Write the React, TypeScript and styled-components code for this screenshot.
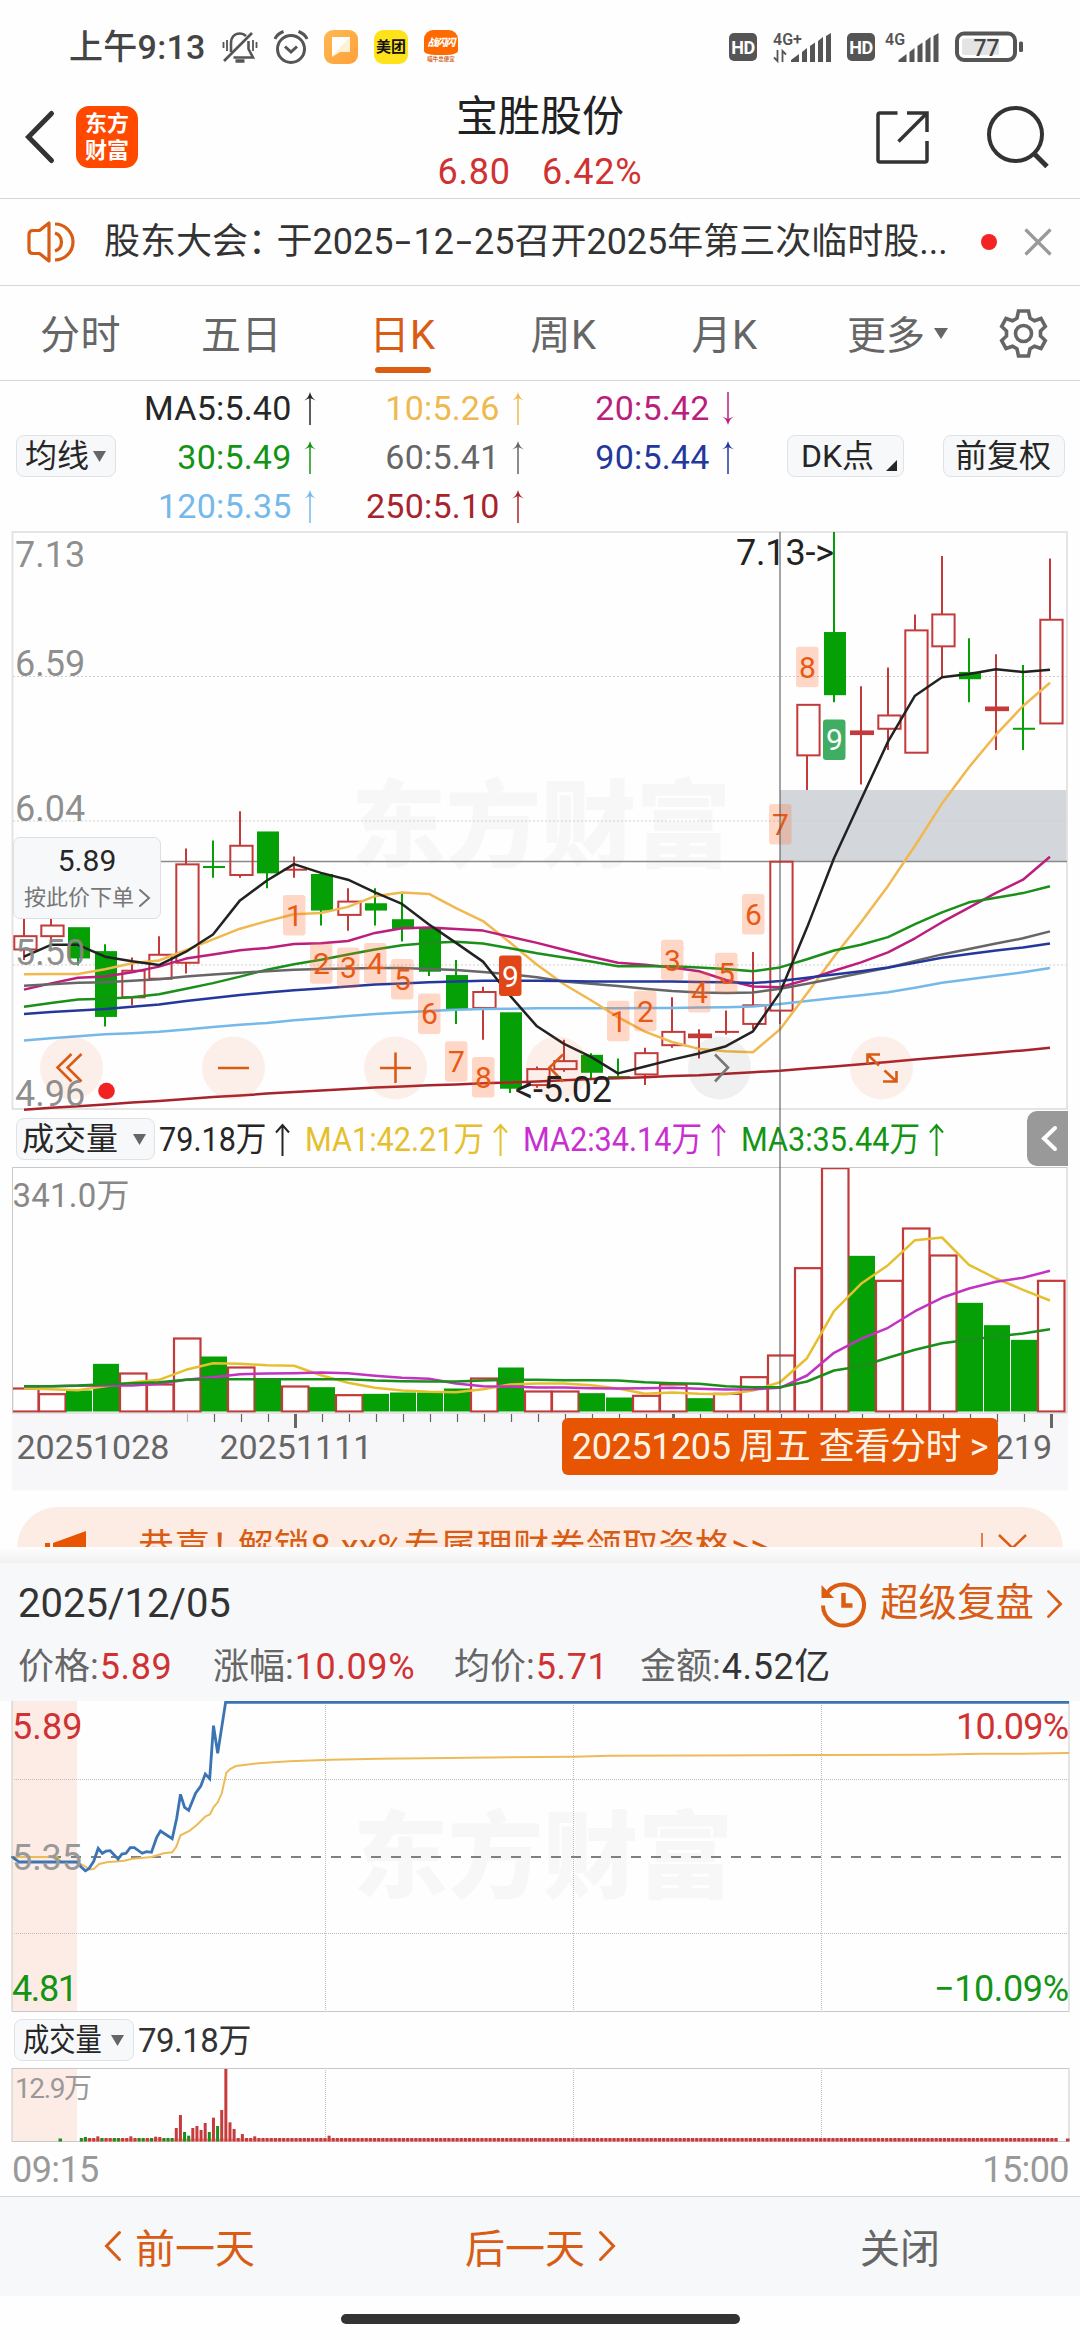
import React from "react";
import styled, { createGlobalStyle } from "styled-components";

const RED = "#c33a3a";
const GREEN = "#05a005";
const ORANGE = "#d95c14";

const GlobalStyle = createGlobalStyle`
  * { box-sizing: border-box; }
  body {
    margin: 0;
    background: #fff;
    color: #333;
    font-family: Roboto, "Noto Sans CJK SC", sans-serif;
    -webkit-font-smoothing: antialiased;
  }
  svg { display: block; flex: none; overflow: visible; }
  svg text { font-family: Roboto, "Noto Sans CJK SC", sans-serif; }
`;

const Screen = styled.main`
  width: 1080px;
  height: 2340px;
  display: flex;
  flex-direction: column;
  overflow: hidden;
  background: #fefefe;
  & > * { flex-shrink: 0; }
`;

/* ---------- status bar ---------- */

const StatusBar = styled.div`
  height: 90px;
  padding: 30px 57px 26px 69px;
  display: flex;
  justify-content: space-between;
  color: #444;
`;
const StatusGroup = styled.div`
  display: flex;
  align-items: center;
  gap: 16px;
  height: 34px;
`;
const Clock = styled.span`
  font-size: 34px;
  line-height: 34px;
  font-weight: 500;
  letter-spacing: 0.3px;
  width: 137px;
  white-space: nowrap;
`;
const AppBadge = styled.span<{ $bg: string }>`
  width: 34px;
  height: 34px;
  border-radius: 9px;
  background: ${(p) => p.$bg};
  display: flex;
  flex-direction: column;
  align-items: center;
  justify-content: center;
  font-weight: 700;
  font-size: 15px;
  line-height: 15px;
  color: #111;
`;
const PromoTop = styled.span`
  height: 25px;
  width: 34px;
  background: #ff6a00;
  border-radius: 9px 9px 12px 12px / 9px 9px 4px 4px;
  color: #fff;
  font-size: 10px;
  font-style: italic;
  font-weight: 900;
  letter-spacing: -1px;
  line-height: 26px;
  text-align: center;
`;
const PromoBottom = styled.span`
  height: 9px;
  font-size: 5.5px;
  line-height: 9px;
  color: #d0662c;
  white-space: nowrap;
`;
const HdBadge = styled.span<{ $tight?: boolean }>`
  width: 28px;
  height: 28px;
  margin-right: ${(p) => (p.$tight ? -6 : 0)}px;
  border-radius: 5px;
  background: #555;
  color: #fff;
  font-size: 18px;
  letter-spacing: -0.5px;
  line-height: 29px;
  font-weight: 700;
  text-align: center;
`;

/* ---------- header ---------- */

const Header = styled.header`
  height: 109px;
  border-bottom: 1px solid #d6d6d6;
  padding: 0 31px 0 26px;
  display: grid;
  grid-template-columns: 260px 1fr 260px;
`;
const HeaderSide = styled.div<{ $end?: boolean }>`
  display: flex;
  align-items: center;
  height: 94px;
  gap: ${(p) => (p.$end ? 58 : 22)}px;
  justify-content: ${(p) => (p.$end ? "flex-end" : "flex-start")};
`;
const Logo = styled.div`
  width: 62px;
  height: 62px;
  border-radius: 13px;
  background: #ff4800;
  color: #fff;
  font-size: 22px;
  font-weight: 700;
  line-height: 27px;
  padding-top: 4px;
  text-align: center;
`;
const TitleBlock = styled.div`
  display: flex;
  flex-direction: column;
  align-items: center;
  padding-left: 5px;
`;
const Title = styled.h1`
  margin: 0;
  height: 56px;
  font-size: 42px;
  line-height: 54px;
  font-weight: 400;
  color: #222;
`;
const Quote = styled.div`
  display: flex;
  gap: 31px;
  height: 40px;
  font-size: 36px;
  line-height: 52px;
  letter-spacing: 0.8px;
  color: #d03232;
`;

/* ---------- notice ---------- */

const Notice = styled.div`
  height: 87px;
  border-bottom: 1px solid #d6d6d6;
  padding: 0 27px;
  display: flex;
  align-items: center;
`;
const NoticeText = styled.div`
  margin-left: 29px;
  width: 877px;
  font-size: 36px;
  line-height: 48px;
  white-space: nowrap;
  color: #333;
`;
const Tight = styled.span<{ $by: number }>`
  letter-spacing: ${(p) => -p.$by}px;
`;
const Dash = styled.span`
  display: inline-block;
  width: 20px;
  text-align: center;
  transform: scaleX(1.6);
`;
const Dot = styled.i`
  width: 16px;
  height: 16px;
  flex: none;
  border-radius: 50%;
  background: #f22424;
  margin-right: 27px;
`;

/* ---------- period tabs ---------- */

const Tabs = styled.nav`
  height: 95px;
  border-bottom: 1px solid #d6d6d6;
  display: flex;
`;
const Tab = styled.div<{ $active?: boolean }>`
  width: 161px;
  display: flex;
  flex-direction: column;
  align-items: center;
  font-size: 40px;
  line-height: 100px;
  height: 94px;
  letter-spacing: 0.5px;
  color: ${(p) => (p.$active ? ORANGE : "#666")};
  &::after {
    content: "";
    display: ${(p) => (p.$active ? "block" : "none")};
    width: 56px;
    height: 6px;
    margin-top: -19px;
    border-radius: 3px;
    background: #db5d12;
    flex: none;
  }
`;
const MoreTab = styled.div`
  display: flex;
  align-items: center;
  gap: 9px;
  height: 94px;
  margin-left: 42px;
  width: 153px;
  font-size: 39px;
  line-height: 60px;
  color: #666;
`;
const MoreLabel = styled.span`
  padding-top: 5px;
`;

/* ---------- MA legend ---------- */

const MaPanel = styled.section`
  height: 150px;
  padding: 0 15px 0 16px;
  display: flex;
  align-items: center;
`;
const Chip = styled.button<{ $w: number; $pad?: number }>`
  width: ${(p) => p.$w}px;
  height: 42px;
  flex: none;
  padding: 0 0 0 ${(p) => p.$pad ?? 8}px;
  border: 1.5px solid #dfe2e7;
  border-radius: 8px;
  background: #f7f8fa;
  display: flex;
  align-items: center;
  font: 32px/38px Roboto, "Noto Sans CJK SC", sans-serif;
  color: #262626;
  text-align: left;
  white-space: nowrap;
`;
const ChipText = styled.span<{ $w: number; $scale?: number }>`
  width: ${(p) => p.$w}px;
  flex: none;
  transform: scaleX(${(p) => p.$scale ?? 1});
  transform-origin: left center;
`;
const MaGrid = styled.div`
  width: 634px;
  display: grid;
  grid-template-columns: 205px 208px 210px;
  grid-auto-rows: 49px;
  margin-left: -5.5px;
  margin-right: 42.5px;
`;
const MaCell = styled.div<{ $c: string }>`
  display: flex;
  justify-content: flex-end;
  align-items: center;
  gap: 12px;
  padding-top: 2px;
  font-size: 34px;
  line-height: 47px;
  letter-spacing: 0.2px;
  color: ${(p) => p.$c};
`;
const Spacer = styled.div`
  flex: 1;
`;

/* ---------- chart stack ---------- */

const ChartStack = styled.section`
  position: relative;
  height: 960px;
`;
const VolumeLegend = styled.div`
  height: 56px;
  padding-left: 16px;
  display: flex;
  align-items: center;
`;
const LegendItems = styled.div`
  display: flex;
  gap: 15px;
  margin-left: 4px;
`;
const LegendItem = styled.div<{ $c: string; $w: number }>`
  width: ${(p) => p.$w}px;
  display: flex;
  justify-content: space-between;
  align-items: center;
  color: ${(p) => p.$c};
`;
const Narrow = styled.span`
  width: 0;
  font-size: 34px;
  line-height: 50px;
  white-space: nowrap;
  transform: scaleX(0.9);
  transform-origin: left center;
`;
const DrawerTab = styled.div`
  position: absolute;
  left: 1027px;
  top: 580px;
  width: 41px;
  height: 55px;
  border-radius: 10px 0 0 10px;
  background: #999;
  color: #fff;
  padding: 15px 0 0 15px;
`;
const CrossLine = styled.i`
  position: absolute;
  left: 779px;
  top: 1px;
  width: 2px;
  height: 881px;
  background: rgba(90, 90, 90, 0.55);
`;
const DateFlag = styled.div`
  position: absolute;
  left: 562px;
  top: 887px;
  width: 436px;
  height: 57px;
  border-radius: 6px;
  background: #e85502;
  color: #fff3e8;
  font-size: 36px;
  letter-spacing: -0.4px;
  line-height: 58px;
  text-align: center;
  white-space: nowrap;
`;
const PriceTip = styled.div`
  position: absolute;
  left: 13px;
  top: 306px;
  width: 148px;
  height: 82px;
  border: 1.5px solid #dcdfe4;
  border-radius: 7px;
  background: #f7f8fa;
  display: flex;
  flex-direction: column;
  align-items: center;
  font-size: 30px;
  line-height: 46px;
  color: #262626;
`;
const TipAction = styled.div`
  display: flex;
  align-items: center;
  gap: 5px;
  font-size: 22px;
  line-height: 34px;
  margin-top: -3px;
  color: #777;
`;

/* ---------- banner ---------- */

const BannerClip = styled.div`
  height: 56px;
  padding: 16px 17px 0;
  overflow: hidden;
`;
const Banner = styled.div`
  height: 82px;
  border-radius: 41px;
  background: #fdece3;
  display: flex;
  align-items: center;
  padding: 0 36px 0 28px;
  color: ${ORANGE};
`;
const BannerText = styled.div`
  margin-left: 51px;
  width: 845px;
  font-size: 36px;
  letter-spacing: 0.35px;
  line-height: 50px;
  white-space: nowrap;
`;

/* ---------- day sheet ---------- */

const SheetShadow = styled.div`
  height: 16px;
  background: linear-gradient(#fefefe, #f0f0f0);
`;
const SheetHead = styled.section`
  height: 138px;
  background: #f7f8fa;
  padding: 0 18px;
`;
const SheetTop = styled.div`
  height: 82px;
  display: flex;
  align-items: center;
  justify-content: space-between;
`;
const SheetDate = styled.div`
  font-size: 40px;
  line-height: 82px;
  color: #333;
`;
const Review = styled.div`
  display: flex;
  align-items: center;
  font-size: 38.5px;
  line-height: 80px;
  height: 82px;
  color: ${ORANGE};
`;
const ReviewText = styled.span`
  height: 82px;
  margin: 0 13px 0 14px;
`;
const Stats = styled.div`
  display: flex;
  height: 50px;
  font-size: 36px;
  line-height: 44px;
  color: #666;
`;
const Stat = styled.div<{ $w: number }>`
  width: ${(p) => p.$w}px;
  white-space: nowrap;
`;
const StatValue = styled.span<{ $c: string }>`
  color: ${(p) => p.$c};
  margin-left: 1px;
  letter-spacing: 0.6px;
`;
const TurnoverRow = styled.div`
  height: 56px;
  padding-left: 14px;
  display: flex;
  align-items: center;
  font-size: 33px;
  color: #333;
`;
const TurnoverValue = styled.span`
  margin-left: 4px;
  padding-top: 2px;
  line-height: 50px;
  letter-spacing: -0.5px;
`;
const TimeAxis = styled.div`
  height: 54px;
  padding: 0 11px 0 12px;
  display: flex;
  justify-content: space-between;
  font-size: 36px;
  line-height: 56px;
  letter-spacing: -0.6px;
  color: #999;
`;
const DayNav = styled.nav`
  height: 100px;
  border-top: 1px solid #d6d6d6;
  background: #f7f8fa;
  display: grid;
  grid-template-columns: repeat(3, 360px);
`;
const DayButton = styled.div<{ $muted?: boolean }>`
  display: flex;
  align-items: center;
  justify-content: center;
  gap: 14px;
  height: 98px;
  font-size: 40px;
  color: ${(p) => (p.$muted ? "#666" : ORANGE)};
`;
const HomeArea = styled.div`
  height: 44px;
  display: flex;
  justify-content: center;
  padding-top: 18px;
`;
const HomeBar = styled.i`
  width: 399px;
  height: 10px;
  border-radius: 5px;
  background: #333;
`;

/* ---------- icons ---------- */

type ChevronProps = { w: number; h: number; dir: "left" | "right"; stroke?: number };
const Chevron = ({ w, h, dir, stroke = 3 }: ChevronProps) => {
  const p = stroke / 2;
  const pts =
    dir === "left" ? `${w - p},${p} ${p},${h / 2} ${w - p},${h - p}` : `${p},${p} ${w - p},${h / 2} ${p},${h - p}`;
  return (
    <svg width={w} height={h}>
      <polyline points={pts} fill="none" stroke="currentColor" strokeWidth={stroke} strokeLinecap="round" />
    </svg>
  );
};

const Caret = ({ w = 13, h = 11 }: { w?: number; h?: number }) => (
  <svg width={w} height={h}>
    <path d={`M0 0H${w}L${w / 2} ${h}Z`} fill="#666" />
  </svg>
);

/* A thin trend arrow; `down` flips it. */
const Trend = ({ down, wide }: { down?: boolean; wide?: boolean }) => (
  <svg width={wide ? 15 : 12} height={33} viewBox={wide ? "0 0 15 33" : "0 0 12 33"}>
    {wide ? (
      <path d="M7.5 33V2M1 9.5L7.5 2L14 9.5" fill="none" stroke="currentColor" strokeWidth="2" />
    ) : (
      <g transform={down ? "rotate(180 6 16.5)" : undefined}>
        <path d="M6 33V3" stroke="currentColor" strokeWidth="1.5" />
        <path d="M6 0C7 4 9 7 12 8.5L6 6L0 8.5C3 7 5 4 6 0Z" fill="currentColor" />
      </g>
    )}
  </svg>
);

const Signal = () => (
  <g fill="#555">
    <path d="M0 30V28L8 22V30Z" />
    <path d="M11 20L16 16V30H11Z" />
    <path d="M19 14L24 10.500V30H19Z" />
    <path d="M27 9L32 5V30H27Z" />
    <path d="M35 4L40 1V30H35Z" />
  </g>
);

const Network = ({ label, data }: { label: string; data?: boolean }) => (
  <svg width={data ? 58 : 54} height={32}>
    <text x={0} y={13.500} fontSize={16} fontWeight={600} fill="#555">{label}</text>
    {data && <path d="M4.500 19V30L1 26.500M9.500 31V20L13 23.500" fill="none" stroke="#555" strokeWidth="1.8" />}
    <g transform={`translate(${data ? 18 : 13.5},1)`}>
      <Signal />
    </g>
  </svg>
);

const MutedBell = () => (
  <svg width={36} height={34} fill="none" stroke="#555" strokeWidth="2.6">
    <path d="M9 22V13.500C9 7 12.500 3.500 18 3.500C20.500 3.500 22.500 4.500 24 6M26.500 11V19L31 27.500H11.500" />
    <path d="M2 31L30 3" />
    <path d="M13.500 31H22.500" strokeWidth="3.500" />
    <path d="M1.500 12V18M5 10V21M34.500 12V18M31 10V21" strokeWidth="1.8" />
  </svg>
);

const Alarm = () => (
  <svg width={34} height={34} fill="none" stroke="#555" strokeWidth="3">
    <circle cx={17} cy={19} r={13.500} />
    <path d="M11 16.500L17 22L23 16.500" />
    <path d="M1 9C2.500 5.500 5.500 3 9.500 1.500M33 9C31.500 5.500 28.500 3 24.500 1.500" />
  </svg>
);

const NoteGlyph = () => (
  <svg width={20} height={22}>
    <path d="M1 1H19V16H9L1 21Z" fill="#fff1d6" />
    <path d="M1 1H19L1 20Z" fill="#fff" />
  </svg>
);

const Battery = () => (
  <svg width={68} height={32}>
    <rect x={2} y={2.500} width={58} height={26.500} rx={7} fill="#fff" stroke="#555" strokeWidth={4} />
    <rect x={7} y={7.500} width={37} height={16.500} rx={2} fill="#e4e4e4" />
    <rect x={64} y={10.500} width={4} height={10.500} rx={1.500} fill="#555" />
    <text x={31.500} y={24.500} fontSize={23} fontWeight={500} fill="#444" textAnchor="middle">77</text>
  </svg>
);

const ShareIcon = () => (
  <svg width={53} height={53} fill="none" stroke="#333" strokeWidth="3.500">
    <path d="M21.500 2H4Q2 2 2 4V49Q2 51 4 51H49Q51 51 51 49V30M31 2H51V21M51 2L22.500 30.500" />
  </svg>
);

const SearchIcon = () => (
  <svg width={62} height={62} fill="none" stroke="#333" strokeWidth="4">
    <circle cx={28.500} cy={28.500} r={26.500} />
    <path d="M47 47.500L60 60.500" strokeWidth="5" />
  </svg>
);

const SpeakerIcon = () => (
  <svg width={48} height={42} fill="none" stroke={ORANGE} strokeWidth="3.200" strokeLinejoin="round">
    <path d="M22 2V40L12.500 32.500H6Q2 32.500 2 28.500V13.500Q2 9.500 6 9.500H12.500Z" />
    <path d="M28 12A9.500 9.500 0 0 1 28 30M28 3A18 18 0 0 1 28 39" />
  </svg>
);

const CloseIcon = () => (
  <svg width={28} height={28}>
    <path d="M1.500 1.500L26.500 26.500M26.500 1.500L1.500 26.500" stroke="#999" strokeWidth="3.200" />
  </svg>
);

const GearIcon = () => (
  <svg width={47} height={49} fill="none" stroke="#666" strokeWidth="3.600">
    <path d="M18.500 2H28.500L30 9.200L34.500 11.800L41 9.500L45.300 17.500L40.500 22V27L45.300 31.500L41 39.500L34.500 37.200L30 39.800L28.500 47H18.500L17 39.800L12.500 37.200L6 39.500L1.700 31.500L6.500 27V22L1.700 17.500L6 9.500L12.500 11.800L17 9.200Z" />
    <circle cx={23.500} cy={24.500} r={8} />
  </svg>
);

const HistoryIcon = () => (
  <svg width={45} height={45} fill="none" stroke="#db5d12" strokeWidth="4">
    <path d="M2 23.500A20.500 20.500 0 1 0 7.500 9" />
    <path d="M0.500 3V16H13Z" fill="#db5d12" stroke="none" />
    <path d="M5 12L11 6" strokeWidth="3.500" />
    <path d="M22.500 11V23.500H31.500" strokeWidth="4.500" />
  </svg>
);

const Megaphone = () => (
  <svg width={42} height={34}>
    <path d="M0 12H5V28H0ZM8 12L41 0V34L8 26Z" fill="#e85502" />
  </svg>
);

/* ---------- daily chart data ---------- */

type Candle = [open: number, close: number, high: number, low: number, up: boolean];
const candles: Candle[] = [
  [5.56, 5.61, 5.68, 5.52, true], [5.61, 5.65, 5.7, 5.59, true], [5.64, 5.53, 5.64, 5.5, false],
  [5.55, 5.31, 5.58, 5.27, false], [5.38, 5.48, 5.53, 5.35, true], [5.45, 5.54, 5.61, 5.45, true],
  [5.51, 5.88, 5.94, 5.47, true], [5.87, 5.87, 5.97, 5.83, false], [5.84, 5.95, 6.08, 5.83, true],
  [6.0, 5.85, 6.0, 5.79, false], [5.86, 5.86, 5.91, 5.83, true], [5.84, 5.71, 5.85, 5.65, false],
  [5.69, 5.74, 5.79, 5.63, true], [5.73, 5.71, 5.79, 5.65, false], [5.67, 5.64, 5.77, 5.59, false],
  [5.64, 5.48, 5.64, 5.46, false], [5.46, 5.34, 5.52, 5.28, false], [5.34, 5.4, 5.42, 5.22, true],
  [5.32, 5.04, 5.32, 5.02, false], [5.05, 5.11, 5.12, 5.04, true], [5.11, 5.14, 5.22, 5.1, true],
  [5.16, 5.1, 5.17, 5.07, false], [5.08, 5.08, 5.15, 5.08, false], [5.09, 5.17, 5.19, 5.05, true],
  [5.2, 5.25, 5.38, 5.19, true], [5.23, 5.24, 5.26, 5.15, true], [5.25, 5.25, 5.33, 5.24, true],
  [5.28, 5.35, 5.55, 5.26, true], [5.33, 5.89, 5.89, 5.28, true], [6.29, 6.48, 6.48, 6.16, true],
  [6.75, 6.52, 7.13, 6.49, false], [6.37, 6.38, 6.55, 6.18, true], [6.39, 6.44, 6.62, 6.31, true],
  [6.3, 6.76, 6.82, 6.3, true], [6.7, 6.82, 7.04, 6.58, true], [6.6, 6.58, 6.73, 6.49, false],
  [6.46, 6.47, 6.67, 6.31, true], [6.39, 6.39, 6.63, 6.31, false], [6.41, 6.8, 7.03, 6.41, true],
];

const cx = (i: number) => 24 + 27 * i;
const priceY = (p: number) => 1 + ((7.13 - p) / 2.17) * 577;
/* Average lines are stored on a 1568-step vertical scale that covers 600px. */
const levelY = (v: number) => (v * 600) / 1568 - 1;
const line = (ys: number[], f: (v: number) => number) => ys.map((v, i) => `${cx(i)},${f(v).toFixed(1)}`).join(" ");

const averages: { color: string; ys: number[] }[] = [
  { color: "#74b9ea", ys: [1334, 1328, 1323, 1318, 1315, 1311, 1305, 1299, 1293, 1288, 1281, 1276, 1270, 1265, 1261, 1257, 1254, 1252, 1251, 1250, 1250, 1250, 1250, 1249, 1249, 1248, 1247, 1245, 1239, 1231, 1223, 1216, 1208, 1196, 1183, 1174, 1165, 1156, 1145] },
  { color: "#a8242c", ys: [1515, 1510, 1506, 1501, 1496, 1492, 1487, 1482, 1478, 1473, 1469, 1465, 1461, 1457, 1454, 1451, 1449, 1446, 1444, 1441, 1438, 1435, 1433, 1430, 1427, 1425, 1421, 1417, 1413, 1407, 1402, 1396, 1390, 1384, 1378, 1372, 1366, 1360, 1353] },
  { color: "#f0b84e", ys: [1161, 1160, 1160, 1148, 1132, 1125, 1098, 1070, 1042, 1022, 1004, 1001, 985, 957, 947, 951, 988, 1022, 1078, 1136, 1187, 1229, 1273, 1311, 1338, 1356, 1362, 1365, 1305, 1211, 1115, 1025, 930, 825, 715, 620, 535, 460, 399] },
  { color: "#bb1e7c", ys: [1201, 1185, 1170, 1167, 1156, 1141, 1120, 1109, 1098, 1092, 1082, 1080, 1074, 1053, 1041, 1039, 1043, 1047, 1063, 1079, 1097, 1115, 1131, 1136, 1143, 1153, 1176, 1193, 1195, 1175, 1152, 1130, 1104, 1067, 1025, 987, 948, 914, 854] },
  { color: "#1a8f1a", ys: [1246, 1236, 1227, 1225, 1221, 1213, 1199, 1184, 1167, 1149, 1135, 1123, 1109, 1096, 1085, 1079, 1076, 1081, 1093, 1106, 1117, 1128, 1140, 1140, 1140, 1143, 1147, 1153, 1143, 1122, 1099, 1084, 1064, 1030, 999, 973, 961, 949, 931] },
  { color: "#666666", ys: [1191, 1187, 1183, 1182, 1178, 1174, 1167, 1162, 1157, 1153, 1149, 1147, 1146, 1145, 1145, 1147, 1150, 1155, 1161, 1169, 1180, 1186, 1192, 1199, 1205, 1209, 1210, 1209, 1199, 1186, 1172, 1158, 1144, 1126, 1109, 1095, 1081, 1067, 1049] },
  { color: "#24389c", ys: [1265, 1260, 1256, 1252, 1246, 1240, 1231, 1223, 1215, 1209, 1203, 1198, 1193, 1188, 1185, 1182, 1180, 1178, 1178, 1178, 1179, 1180, 1180, 1180, 1180, 1181, 1182, 1184, 1179, 1170, 1162, 1153, 1143, 1131, 1118, 1108, 1099, 1091, 1081] },
  { color: "#222222", ys: [1115, 1084, 1084, 1115, 1127, 1137, 1102, 1057, 968, 916, 873, 896, 914, 947, 977, 1031, 1079, 1128, 1217, 1297, 1343, 1377, 1420, 1402, 1384, 1368, 1349, 1310, 1209, 1039, 858, 705, 553, 433, 385, 376, 364, 371, 365] },
];

const counts: [index: number, label: string, top: number][] = [
  [10, "1", 954], [11, "2", 1080], [12, "3", 1091], [13, "4", 1079], [14, "5", 1121], [15, "6", 1211],
  [16, "7", 1336], [17, "8", 1377], [18, "9", 1112], [22, "1", 1230], [23, "2", 1204], [24, "3", 1071],
  [25, "4", 1155], [26, "5", 1105], [27, "6", 951], [28, "7", 716], [29, "8", 305], [30, "9", 495],
];

const priceLabels: [string, number][] = [["7.13", 36], ["6.59", 145], ["6.04", 290], ["5.50", 434], ["4.96", 574.5]];

const Watermark = ({ x, y }: { x: number; y: number }) => (
  <text x={x} y={y} fontSize={95} fontWeight={900} fill="#f7f7f7" textLength={380}>东方财富</text>
);

const FloatingTools = () => (
  <g fill="none" strokeWidth={2.6} stroke={ORANGE}>
    {[71.5, 233.5, 395.5, 557.5, 719.5, 881.5].map((x, i) => (
      <circle key={x} cx={x} cy={537} r={31.500} stroke="none" fill={i === 4 ? "rgba(60,60,60,.07)" : "rgba(232,90,20,.09)"} />
    ))}
    <path d="M71.500 523L57.500 536.500L71.500 550.500M81.500 523L67.500 536.500L81.500 550.500" />
    <path d="M218 537H249M380 537H411M395.500 521.500V552" />
    <path d="M563 523.500L549.500 536.500L563 550.500" />
    <path d="M715 523.500L728 536.500L715 550.500" stroke="#777" />
    <path d="M867.500 533V523.500H880M867.500 523.500L879 534.500M896.500 540V550.500H883M896.500 550.500L884.500 539.500" />
  </g>
);

const PriceChart = () => (
  <svg width={1080} height={580}>
    <Watermark x={351} y={329} />
    <rect x={780} y={259} width={287} height={71.500} fill="#d3d6db" />
    <g stroke="#cfcfcf" strokeWidth={1} strokeDasharray="2 2">
      {[145.5, 290, 434].map((y) => <path key={y} d={`M13 ${y}H1067`} />)}
    </g>
    <rect x={12.500} y={1} width={1054.500} height={577} fill="none" stroke="#e2e2e2" strokeWidth={1.800} />
    <path d="M160 330.500H1067" stroke="#8a8a8a" strokeWidth={1.500} />
    {candles.map(([open, close, high, low, up], i) => {
      const x = cx(i);
      const top = priceY(Math.max(open, close));
      const bottom = priceY(Math.min(open, close));
      const color = up ? RED : GREEN;
      const thin = bottom - top < 3;
      return (
        <g key={i} stroke={color} strokeWidth={2}>
          <path d={`M${x} ${priceY(high)}V${top}M${x} ${bottom}V${priceY(low)}`} />
          {up && !thin ? (
            <rect x={x - 9.700} y={top} width={22.300} height={bottom - top} fill="none" />
          ) : (
            <rect x={x - (up ? 11 : 10)} y={top - 1} width={up ? 24 : 22} height={bottom - top + 2} fill={color} stroke="none" />
          )}
        </g>
      );
    })}
    {averages.map((a) => (
      <polyline key={a.color} points={line(a.ys, levelY)} fill="none" stroke={a.color} strokeWidth={2.500} strokeLinejoin="round" />
    ))}
    <FloatingTools />
    {counts.map(([i, label, top]) => {
      const solid = label === "9";
      const bg = solid ? (i < 20 ? "#e04618" : "#3fae62") : "rgba(255,110,50,.27)";
      return (
        <g key={i}>
          <rect x={cx(i) - 11} y={levelY(top)} width={22.500} height={40.500} rx={3} fill={bg} />
          <text x={cx(i) + 0.500} y={levelY(top) + 31} fontSize={30} textAnchor="middle" fill={solid ? "#fff" : "#e85a14"}>{label}</text>
        </g>
      );
    })}
    {priceLabels.map(([t, y]) => <text key={t} x={15} y={y} fontSize={36} fill="#888" fillOpacity={0.95}>{t}</text>)}
    <text x={736} y={34} fontSize={36} fill="#222" textLength={98}>7.13-&gt;</text>
    <text x={515} y={570.500} fontSize={36} fill="#222" textLength={97}>&lt;-5.02</text>
    <circle cx={106.500} cy={560} r={8.300} fill="#f02222" />
  </svg>
);

/* ---------- volume chart data ---------- */

const volumes: [top: number, up: boolean][] = [
  [864, true], [881, true], [870, false], [790, false], [819, true], [852, true], [714, true], [768, false],
  [801, true], [835, false], [858, true], [860, false], [884, true], [880, false], [876, false], [876, false],
  [864, false], [834, true], [801, false], [873, true], [873, true], [878, false], [891, false], [886, true],
  [852, true], [893, false], [880, true], [830, true], [765, true], [503, true], [203, true], [466, false],
  [541, true], [384, true], [465, true], [607, false], [674, false], [718, false], [541, true],
];
const volY = (v: number) => (v - 201) / 3 + 0.5;
const volumeAverages = [
  { color: "#e6bf2e", ys: [863, 866, 869, 857, 846, 838, 808, 788, 790, 794, 796, 824, 847, 862, 870, 874, 875, 866, 852, 849, 849, 854, 864, 880, 876, 880, 881, 870, 845, 773, 632, 550, 494, 419, 411, 493, 534, 568, 600] },
  { color: "#c233c2", ys: [857, 857, 856, 855, 855, 850, 838, 830, 821, 819, 818, 816, 818, 826, 832, 835, 849, 857, 858, 861, 861, 863, 864, 863, 862, 865, 867, 866, 862, 825, 757, 715, 682, 632, 592, 564, 544, 532, 511] },
  { color: "#1a8f1a", ys: [857, 857, 855, 851, 848, 845, 838, 836, 836, 836, 836, 836, 836, 840, 842, 843, 843, 840, 838, 838, 839, 839, 840, 845, 848, 850, 857, 860, 860, 843, 810, 797, 772, 748, 728, 718, 708, 699, 686] },
];

const VolumeChart = () => (
  <svg width={1080} height={324}>
    <defs>
      <clipPath id="volume-frame"><rect x={12} y={0.500} width={1056} height={246} /></clipPath>
    </defs>
    <rect x={12} y={247} width={1056} height={76.500} fill="#f7f7fa" />
    <g clipPath="url(#volume-frame)">
      {volumes.map(([v, up], i) =>
        up ? (
          <rect key={i} x={cx(i) - 12} y={volY(v)} width={26.500} height={volY(933) - volY(v)} fill="none" stroke={RED} strokeWidth={2.200} />
        ) : (
          <rect key={i} x={cx(i) - 12} y={volY(v)} width={26} height={volY(933) - volY(v)} fill={GREEN} />
        ),
      )}
      {volumeAverages.map((a) => (
        <polyline key={a.color} points={line(a.ys, volY)} fill="none" stroke={a.color} strokeWidth={2.500} strokeLinejoin="round" />
      ))}
    </g>
    <rect x={12.500} y={0.500} width={1054.500} height={245.500} fill="none" stroke="#c9c9c9" />
    {candles.map((_, i) => {
      if (i < 6) return null;
      const major = i % 14 === 10;
      return <path key={i} d={`M${cx(i) + 1.5} 247V${major ? 261 : 255}`} stroke={i === 6 ? "#bbb" : "#666"} strokeWidth={major ? 3 : 1.2} />;
    })}
    <text x={12.500} y={39.500} fontSize={33} fill="#888" textLength={117}>341.0万</text>
    <g fontSize={34} fill="#666">
      <text x={16.500} y={291.500}>20251028</text>
      <text x={219.500} y={291.500}>20251111</text>
      <text x={1052} y={291.500} textAnchor="end">219</text>
    </g>
  </svg>
);

/* ---------- intraday chart ---------- */

const PX = 540 / 1568;
const trace = (pts: number[][]) => pts.map(([x, y]) => `${(x * PX).toFixed(1)},${((y - 453) / 3).toFixed(1)}`).join(" ");
const intraday = [
  [36, 921], [48, 930], [55, 936], [224, 936], [235, 950], [248, 962], [258, 956], [272, 934], [285, 895],
  [297, 910], [308, 903], [320, 902], [343, 927], [354, 912], [366, 910], [378, 893], [390, 893], [413, 910],
  [425, 905], [440, 907], [455, 862], [466, 843], [500, 866], [513, 805], [524, 733], [536, 772], [548, 781],
  [568, 730], [583, 708], [596, 672], [609, 686], [620, 527], [632, 610], [655, 457], [3104, 457],
];
const intradayAvg = [
  [36, 921], [165, 921], [178, 936], [224, 936], [262, 958], [272, 957], [288, 942], [310, 937], [360, 932],
  [385, 926], [440, 921], [475, 910], [500, 907], [512, 890], [524, 856], [550, 843], [572, 824], [597, 799],
  [610, 793], [620, 772], [632, 757], [644, 730], [657, 668], [668, 657], [685, 648], [750, 640], [840, 634],
  [960, 629], [1100, 626], [1300, 624], [1568, 621], [1668, 620], [1768, 617], [2385, 615], [2698, 614],
  [2848, 611], [2968, 611], [3104, 609],
];
const hourLines = [325.5, 573.5, 821.5];

const IntradayChart = () => (
  <svg width={1080} height={311}>
    <rect x={12} y={0} width={65} height={310} fill="#fdece6" />
    <Watermark x={353} y={190} />
    <g stroke="#bdbdbd" strokeWidth={1} strokeDasharray="1 1" fill="none">
      <path d="M14 78.500H1067M14 232.500H1067" />
      {hourLines.map((x) => <path key={x} d={`M${x} 4V310`} />)}
    </g>
    <path d="M12 0V310.500H1069V0" fill="none" stroke="#c9c9c9" />
    <path d="M11 156H1064" stroke="#808080" strokeWidth={2} strokeDasharray="10 10" />
    <polyline points={trace(intradayAvg)} fill="none" stroke="#ecbb58" strokeWidth={2} />
    <polyline points={trace(intraday)} fill="none" stroke="#3a74b4" strokeWidth={2.800} />
    <g fontSize={36}>
      <text x={12} y={38} fill="#d03232" textLength={70.500}>5.89</text>
      <text x={12} y={169} fill="#999" textLength={70}>5.35</text>
      <text x={12} y={299.500} fill="#149414" textLength={66}>4.81</text>
      <text x={1069} y={38} fill="#d03232" textAnchor="end" textLength={113}>10.09%</text>
      <text x={1069} y={299.500} fill="#149414" textAnchor="end" textLength={135}>−10.09%</text>
    </g>
  </svg>
);

const busyMinutes: Record<number, number> = {
  1: 381, 4: 379, 12: 379, 18: 380, 19: 381, 23: 354, 24: 315, 25: 366, 26: 377, 27: 354, 28: 348, 29: 360, 30: 339,
  31: 366, 32: 323, 33: 348, 34: 300, 35: 177, 36: 337, 37: 357, 39: 372, 42: 379, 60: 377,
};
const fallingMinutes = new Set([0, 1, 5, 8, 9, 14, 15, 17, 20, 21, 22, 25, 26, 31, 33]);

const IntradayVolume = () => (
  <svg width={1080} height={74}>
    <rect x={12} y={1} width={65} height={72} fill="#fdece6" />
    <g stroke="#bdbdbd" strokeDasharray="1 1">
      {hourLines.map((x) => <path key={x} d={`M${x} 2V72`} />)}
    </g>
    <rect x={12} y={0.500} width={1057} height={73} fill="none" stroke="#c9c9c9" />
    <path d="M81 72H1058" stroke="#f3a9a9" strokeWidth={3} />
    <rect x={58.500} y={70.500} width={3.500} height={3} fill="#1a8f1a" />
    {Array.from({ length: 237 }, (_, k) => {
      const top = ((busyMinutes[k] ?? 384) - 174) / 3;
      return <rect key={k} x={79.8 + 4.13 * k} y={top} width={3} height={73.5 - top} fill={fallingMinutes.has(k) ? "#1a8f1a" : "#c63c3c"} />;
    })}
    <rect x={1066} y={70.500} width={3.500} height={3} fill="#c63c3c" />
    <text x={15} y={30} fontSize={28} fill="#999" textLength={77}>12.9万</text>
  </svg>
);

/* ---------- page ---------- */

const maRows: [string, string, boolean?][] = [
  ["MA5:5.40", "#262626"], ["10:5.26", "#f0b84e"], ["20:5.42", "#bb1e7c", true],
  ["30:5.49", "#149414"], ["60:5.41", "#666"], ["90:5.44", "#24389c"],
  ["120:5.35", "#74b9ea"], ["250:5.10", "#a8242c"],
];

const legend: [string, string, number][] = [
  ["79.18万", "#262626", 131], ["MA1:42.21万", "#e6bf2e", 203], ["MA2:34.14万", "#c92fd0", 203], ["MA3:35.44万", "#149414", 203],
];

const stats: [string, string, string, number][] = [
  ["价格:", "5.89", "#d03232", 195], ["涨幅:", "10.09%", "#d03232", 241],
  ["均价:", "5.71", "#d03232", 186], ["金额:", "4.52亿", "#333", 200],
];

export default function App() {
  return (
    <Screen>
      <GlobalStyle />
      <StatusBar>
        <StatusGroup>
          <Clock>上午9:13</Clock>
          <MutedBell />
          <Alarm />
          <AppBadge $bg="linear-gradient(135deg, #ffb850, #ffa03c)"><NoteGlyph /></AppBadge>
          <AppBadge $bg="#ffe31a">美团</AppBadge>
          <AppBadge $bg="#fff">
            <PromoTop>战闪闪</PromoTop>
            <PromoBottom>喵牛总便宜</PromoBottom>
          </AppBadge>
        </StatusGroup>
        <StatusGroup>
          <HdBadge>HD</HdBadge>
          <Network label="4G+" data />
          <HdBadge $tight>HD</HdBadge>
          <Network label="4G" />
          <Battery />
        </StatusGroup>
      </StatusBar>

      <Header>
        <HeaderSide>
          <Chevron w={28} h={52} dir="left" stroke={5} />
          <Logo>东方<br />财富</Logo>
        </HeaderSide>
        <TitleBlock>
          <Title>宝胜股份</Title>
          <Quote><span>6.80</span><span>6.42%</span></Quote>
        </TitleBlock>
        <HeaderSide $end>
          <ShareIcon />
          <SearchIcon />
        </HeaderSide>
      </Header>

      <Notice>
        <SpeakerIcon />
        <NoticeText>
          股东大会<Tight $by={7.5}>：</Tight>于2025<Dash>-</Dash>12<Dash>-</Dash>25召开2025年第三次临时股...
        </NoticeText>
        <Dot />
        <CloseIcon />
      </Notice>

      <Tabs>
        <Tab>分时</Tab>
        <Tab>五日</Tab>
        <Tab $active>日K</Tab>
        <Tab>周K</Tab>
        <Tab>月K</Tab>
        <MoreTab><MoreLabel>更多</MoreLabel><Caret w={14} h={11} /></MoreTab>
        <HeaderSide><GearIcon /></HeaderSide>
      </Tabs>

      <MaPanel>
        <Chip $w={100}><ChipText $w={68}>均线</ChipText><Caret /></Chip>
        <MaGrid>
          {maRows.map(([text, color, down]) => (
            <MaCell key={text} $c={color}>{text}<Trend down={down} /></MaCell>
          ))}
        </MaGrid>
        <Chip $w={117} $pad={13}>
          <ChipText $w={85}>DK点</ChipText>
          <svg width={11} height={32}><path d="M11 20V31H0Z" fill="#262626" /></svg>
        </Chip>
        <Spacer />
        <Chip $w={122} $pad={11}>前复权</Chip>
      </MaPanel>

      <ChartStack>
        <PriceChart />
        <VolumeLegend>
          <Chip $w={139} $pad={5}><ChipText $w={111}>成交量</ChipText><Caret /></Chip>
          <LegendItems>
            {legend.map(([text, color, w]) => (
              <LegendItem key={text} $c={color} $w={w}><Narrow>{text}</Narrow><Trend wide /></LegendItem>
            ))}
          </LegendItems>
        </VolumeLegend>
        <VolumeChart />
        <CrossLine />
        <PriceTip>
          5.89
          <TipAction>按此价下单<Chevron w={11} h={18} dir="right" stroke={2} /></TipAction>
        </PriceTip>
        <DrawerTab><Chevron w={15} h={25} dir="left" stroke={4} /></DrawerTab>
        <DateFlag>20251205 周五 查看分时 &gt;</DateFlag>
      </ChartStack>

      <BannerClip>
        <Banner>
          <Megaphone />
          <BannerText>恭喜<Tight $by={9}>！</Tight>解锁8.xx%专属理财券领取资格&gt;&gt;</BannerText>
          <svg width={46} height={30}>
            <path d="M1 0V30" stroke={ORANGE} strokeWidth={1.500} />
            <path d="M18 2L31.500 15L45 2" fill="none" stroke={ORANGE} strokeWidth={2.500} />
          </svg>
        </Banner>
      </BannerClip>

      <SheetShadow />
      <SheetHead>
        <SheetTop>
          <SheetDate>2025/12/05</SheetDate>
          <Review><HistoryIcon /><ReviewText>超级复盘</ReviewText><Chevron w={15} h={28} dir="right" stroke={2.800} /></Review>
        </SheetTop>
        <Stats>
          {stats.map(([label, value, color, w]) => (
            <Stat key={label} $w={w}>{label}<StatValue $c={color}>{value}</StatValue></Stat>
          ))}
        </Stats>
      </SheetHead>
      <IntradayChart />
      <TurnoverRow>
        <Chip $w={120}><ChipText $w={88} $scale={0.820}>成交量</ChipText><Caret /></Chip>
        <TurnoverValue>79.18万</TurnoverValue>
      </TurnoverRow>
      <IntradayVolume />
      <TimeAxis><span>09:15</span><span>15:00</span></TimeAxis>
      <DayNav>
        <DayButton><Chevron w={16} h={30} dir="left" />前一天</DayButton>
        <DayButton>后一天<Chevron w={16} h={30} dir="right" /></DayButton>
        <DayButton $muted>关闭</DayButton>
      </DayNav>
      <HomeArea><HomeBar /></HomeArea>
    </Screen>
  );
}
